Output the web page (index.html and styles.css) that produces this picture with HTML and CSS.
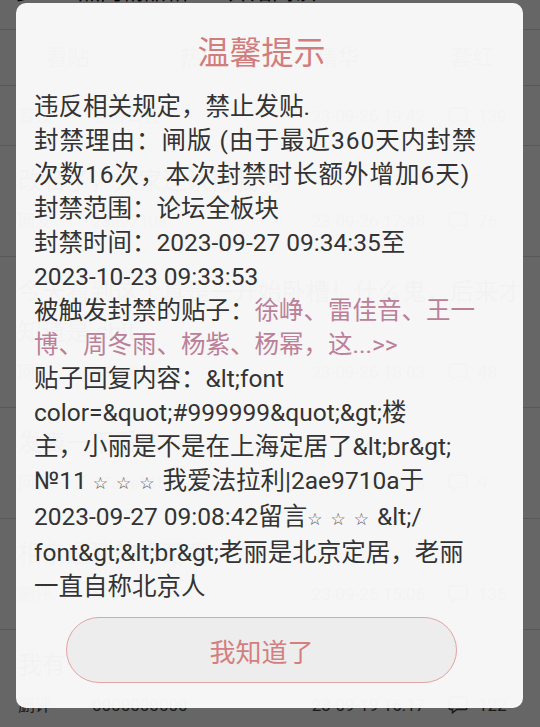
FILE: index.html
```html
<!DOCTYPE html>
<html>
	<head>
		<meta charset="utf-8">
		<title>温馨提示</title>
		<link rel="stylesheet" href="styles.css">
	</head>
	<body>
		<div class="page">
			<div class="topline"><span>步</span><span>热门精品帖</span><span>开始阅读</span></div>
			<div class="tabs">
				<span>看贴</span><span>热门</span><span>精华</span><span>套红</span>
			</div>
			<div class="row short">
				<div class="meta"><span class="who">置顶</span><span class="uid">版务公告</span><span class="date">23-09-26 19:42</span><span class="cnt"><svg viewBox="0 0 20 18"><path d="M3 2h14a1 1 0 0 1 1 1v9a1 1 0 0 1-1 1H9l-4 3v-3H3a1 1 0 0 1-1-1V3a1 1 0 0 1 1-1z"/></svg>139</span></div>
			</div>
			<div class="row">
				<div class="subject">改名了，大家还认得我吗</div>
				<div class="meta"><span class="who">网友</span><span class="uid">2ae9710a</span><span class="date">23-09-26 17:48</span><span class="cnt"><svg viewBox="0 0 20 18"><path d="M3 2h14a1 1 0 0 1 1 1v9a1 1 0 0 1-1 1H9l-4 3v-3H3a1 1 0 0 1-1-1V3a1 1 0 0 1 1-1z"/></svg>76</span></div>
			</div>
			<div class="row">
				<div class="subject">今天看到这个真是一开始卧槽！什么鬼，后来才知道是 shit</div>
				<div class="meta"><span class="who">网友</span><span class="uid">c81d02fe</span><span class="date">23-09-26 18:03</span><span class="cnt"><svg viewBox="0 0 20 18"><path d="M3 2h14a1 1 0 0 1 1 1v9a1 1 0 0 1-1 1H9l-4 3v-3H3a1 1 0 0 1-1-1V3a1 1 0 0 1 1-1z"/></svg>48</span></div>
			</div>
			<div class="row">
				<div class="subject">发表一下看法</div>
				<div class="meta"><span class="who">网友</span><span class="uid">77a0e31b</span><span class="date">23-09-26 09:18</span><span class="cnt"><svg viewBox="0 0 20 18"><path d="M3 2h14a1 1 0 0 1 1 1v9a1 1 0 0 1-1 1H9l-4 3v-3H3a1 1 0 0 1-1-1V3a1 1 0 0 1 1-1z"/></svg>9</span></div>
			</div>
			<div class="row">
				<div class="subject">相亲遇到的奇葩事</div>
				<div class="meta"><span class="who">删评</span><span class="uid">5e02b6c4</span><span class="date">23-09-25 15:06</span><span class="cnt"><svg viewBox="0 0 20 18"><path d="M3 2h14a1 1 0 0 1 1 1v9a1 1 0 0 1-1 1H9l-4 3v-3H3a1 1 0 0 1-1-1V3a1 1 0 0 1 1-1z"/></svg>135</span></div>
			</div>
			<div class="row">
				<div class="subject">我有一个问题想问问大家</div>
				<div class="meta"><span class="who">删评</span><span class="uid">0000000000</span><span class="date">23-09-19 16:17</span><span class="cnt"><svg viewBox="0 0 20 18"><path d="M3 2h14a1 1 0 0 1 1 1v9a1 1 0 0 1-1 1H9l-4 3v-3H3a1 1 0 0 1-1-1V3a1 1 0 0 1 1-1z"/></svg>122</span></div>
			</div>
		</div>

		<div class="mask">
			<div class="dialog">
				<h2>温馨提示</h2>
				<div class="msg">
					<p>违反相关规定，禁止发贴.</p>
					<p class="reason">封禁理由：闸版 (由于最近360天内封禁<br>次数16次，本次封禁时长额外增加6天)</p>
					<p>封禁范围：论坛全板块</p>
					<p>封禁时间：2023-09-27 09:34:35至<br>2023-10-23 09:33:53</p>
					<p>被触发封禁的贴子：<a href="#">徐峥、雷佳音、王一<br>博、周冬雨、杨紫、杨幂，这...&gt;&gt;</a></p>
					<p>贴子回复内容：&amp;lt;font<br>color=&amp;quot;#999999&amp;quot;&amp;gt;楼<br>主，小丽是不是在上海定居了&amp;lt;br&amp;gt;<br>№11 <span class="star">☆☆☆</span>我爱法拉利|2ae9710a于<br>2023-09-27 09:08:42留言<span class="star">☆☆☆</span>&amp;lt;/<br>font&amp;gt;&amp;lt;br&amp;gt;老丽是北京定居，老丽<br>一直自称北京人</p>
				</div>
				<button class="ok">我知道了</button>
			</div>
		</div>
	</body>
</html>
```

FILE: styles.css
```css
html,body{margin: 0; padding: 0;}
body{background-color: #fff; font-family: Roboto, "Noto Sans CJK SC", sans-serif; color: #333; width: 540px; height: 727px; overflow: hidden; position: relative;}

.page{height: 727px; overflow: hidden;}
.topline{height: 30px; border-bottom: 1px solid #ddd; display: flex; gap: 40px; padding: 0 16px; font-size: 22px; line-height: 0; box-sizing: border-box;}
.topline span{margin-top: -8px; color: #111;}
.tabs{height: 56px; display: flex; border-bottom: 1px solid #ddd; box-sizing: border-box;}
.tabs span{flex: 1; text-align: center; line-height: 56px; font-size: 22px; color: #555;}
.row{padding: 15px 17px 15px 18px; border-bottom: 1px solid #ddd;}
.row.short{padding: 10px 17px 9px 18px;}
.subject{font-size: 24px; line-height: 40px; color: #222;}
.meta{display: flex; align-items: center; font-size: 17px; line-height: 40px; color: #444;}
.meta .who{width: 74px;}
.meta .uid{flex: 1;}
.meta .date{margin-right: 22px;}
.meta .cnt{display: flex; align-items: center; gap: 9px; width: 76px;}
.meta svg{width: 22px; height: 20px; fill: none; stroke: #444; stroke-width: 1.4;}

.mask{position: absolute; left: 0; top: 0; right: 0; bottom: 0; background-color: rgba(0,0,0,.6);}
.dialog{margin: 3px 17px 0 16px; height: 705px; box-sizing: border-box; padding: 28px 34px 0 18px; background-color: rgba(252,252,252,.96); border-radius: 10px;}
.dialog h2{margin: 0; font-size: 32px; line-height: 44px; font-weight: 400; text-align: center; color: #d27d7d;}
.msg{margin-top: 15px; font-size: 24.5px; line-height: 34px; color: #333; white-space: nowrap;}
.msg p{margin: 0;}
.msg .reason{letter-spacing: 1px;}
.msg a{color: #bb8098; text-decoration: none;}
.star{font-family: "DejaVu Sans", sans-serif; font-size: 17px; letter-spacing: 8px; color: #555;}
.ok{display: block; box-sizing: border-box; width: 391px; height: 66px; margin: 13px auto 0; border: 1.5px solid #e2a4a4; border-radius: 33px; background-color: #ededed; color: #d47f7f; font-family: Roboto, "Noto Sans CJK SC", sans-serif; font-size: 26px;}
```
